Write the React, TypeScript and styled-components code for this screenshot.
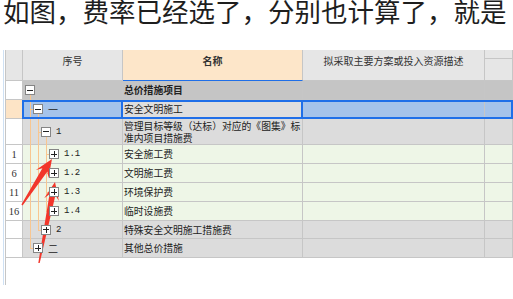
import React from "react";
import styled, { createGlobalStyle, css } from "styled-components";

const GlobalStyle = createGlobalStyle`
  html, body {
    margin: 0;
    padding: 0;
    background: #ffffff;
  }
  body {
    width: 513px;
    height: 299px;
    overflow: hidden;
    position: relative;
    font-family: "Noto Sans CJK SC", "Noto Sans", sans-serif;
  }
`;

const CJK = `"Noto Sans CJK SC", "Noto Sans", sans-serif`;
const ORANGE = "#f8c690";
const BLUE = "#1f6fe8";
const LINE = "#c6c6c6";

type Tone = "group" | "selected" | "grey" | "green";

const tones: Record<Tone, string> = {
  group: "#c5c5c5",
  selected: "#a5c3ea",
  grey: "#dcdcdc",
  green: "#eef6e7",
};

const Question = styled.div`
  font-family: ${CJK};
  font-size: 26.5px;
  line-height: 22px;
  color: #1e1e1e;
  white-space: nowrap;
  padding-left: 3px;
`;

const Frame = styled.div`
  margin: 28px 0 0 3px;
  height: 235px;
  border-left: 1px solid #cfe1f4;
  padding-left: 1px;
`;

const Grid = styled.div`
  height: 100%;
  border-left: 1px solid ${LINE};
  font-family: ${CJK};
  font-size: 10px;
  color: #222;
`;

const Row = styled.div<{ $h: number; $selected?: boolean }>`
  display: flex;
  height: ${(p) => p.$h}px;
  position: relative;

  ${(p) =>
    p.$selected &&
    css`
      &::after {
        content: "";
        position: absolute;
        left: 16px;
        right: 0;
        top: 0;
        bottom: 0;
        border: 2px solid ${BLUE};
        pointer-events: none;
      }
    `}
`;

const Cell = styled.div<{ $w?: number; $bg: string }>`
  box-sizing: border-box;
  ${(p) => (p.$w ? `width: ${p.$w}px; flex: none;` : "flex: 1;")}
  background: ${(p) => p.$bg};
  border-right: 1px solid ${LINE};
  border-bottom: 1px solid ${LINE};
  position: relative;
  display: flex;
  align-items: center;
`;

const NumCell = styled(Cell)`
  justify-content: center;
  font-family: "Liberation Serif", serif;
  font-size: 10.5px;
  color: #333;
`;

const HeadCell = styled(Cell)<{ $bold?: boolean; $mark?: boolean }>`
  align-items: flex-start;
  justify-content: center;
  padding-top: 1px;
  line-height: 19px;
  font-weight: ${(p) => (p.$bold ? 700 : 400)};
  color: #333;
  ${(p) => p.$mark && `border-bottom-color: ${BLUE};`}
`;

const SubHead = styled.div`
  width: 100%;
  height: 7px;
  border-bottom: 1px solid ${LINE};
`;

const NameCell = styled(Cell)<{ $bold?: boolean; $focus?: boolean }>`
  padding-left: 1px;
  line-height: 12px;
  font-size: 9.8px;
  white-space: nowrap;
  font-weight: ${(p) => (p.$bold ? 700 : 400)};

  ${(p) =>
    p.$focus &&
    css`
      &::after {
        content: "";
        position: absolute;
        left: -2px;
        right: -1px;
        top: 0;
        bottom: -1px;
        border: 2px solid ${BLUE};
      }
    `}
`;

const TreeCell = styled(Cell)`
  align-items: stretch;
  padding-left: 2px;
`;

type GuideKind = "pipe" | "tee" | "elbow";

const Guide = styled.span<{ $kind: GuideKind }>`
  width: 8px;
  flex: none;
  position: relative;

  &::before {
    content: "";
    position: absolute;
    left: 5px;
    width: 1px;
    top: 0;
    background: ${ORANGE};
    bottom: ${(p) => (p.$kind === "elbow" ? "50%" : "-1px")};
  }

  ${(p) =>
    p.$kind !== "pipe" &&
    css`
      &::after {
        content: "";
        position: absolute;
        left: 5px;
        width: 3px;
        height: 1px;
        top: 50%;
        background: ${ORANGE};
      }
    `}
`;

const Node = styled.span<{ $open: boolean }>`
  width: 10px;
  flex: none;
  position: relative;
  display: flex;
  align-items: center;

  ${(p) =>
    p.$open &&
    css`
      &::after {
        content: "";
        position: absolute;
        left: 5px;
        width: 1px;
        top: calc(50% + 5px);
        bottom: -1px;
        background: ${ORANGE};
      }
    `}
`;

const Toggle = styled.span<{ $plus: boolean }>`
  box-sizing: border-box;
  width: 10px;
  height: 10px;
  border: 1px solid #858585;
  background: #fff;
  position: relative;
  z-index: 1;

  &::before {
    content: "";
    position: absolute;
    left: 1px;
    top: 3.5px;
    width: 6px;
    height: 1px;
    background: #222;
  }

  ${(p) =>
    p.$plus &&
    css`
      &::after {
        content: "";
        position: absolute;
        left: 3.5px;
        top: 1px;
        width: 1px;
        height: 6px;
        background: #222;
      }
    `}
`;

const Code = styled.span<{ $mono?: boolean }>`
  align-self: center;
  margin-left: 5px;
  font-family: ${(p) => (p.$mono ? `"Liberation Mono", monospace` : CJK)};
  font-size: ${(p) => (p.$mono ? "9px" : "10px")};
  color: #222;
`;

const Arrows = styled.svg`
  position: absolute;
  left: 0;
  top: 0;
  pointer-events: none;
`;

type Item = {
  num: string;
  tone: Tone;
  guides: GuideKind[];
  plus: boolean;
  open: boolean;
  code: string;
  mono?: boolean;
  name: React.ReactNode;
  h: number;
};

const items: Item[] = [
  { num: "", tone: "group", guides: [], plus: false, open: true, code: "", name: "总价措施项目", h: 19 },
  { num: "", tone: "selected", guides: ["tee"], plus: false, open: true, code: "一", name: "安全文明施工", h: 19 },
  {
    num: "",
    tone: "grey",
    guides: ["pipe", "tee"],
    plus: false,
    open: true,
    code: "1",
    mono: true,
    name: (
      <>
        管理目标等级（达标）对应的《图集》标
        <br />
        准内项目措施费
      </>
    ),
    h: 26,
  },
  { num: "1", tone: "green", guides: ["pipe", "pipe", "tee"], plus: true, open: false, code: "1.1", mono: true, name: "安全施工费", h: 19 },
  { num: "6", tone: "green", guides: ["pipe", "pipe", "tee"], plus: true, open: false, code: "1.2", mono: true, name: "文明施工费", h: 19 },
  { num: "11", tone: "green", guides: ["pipe", "pipe", "tee"], plus: true, open: false, code: "1.3", mono: true, name: "环境保护费", h: 19 },
  { num: "16", tone: "green", guides: ["pipe", "pipe", "elbow"], plus: true, open: false, code: "1.4", mono: true, name: "临时设施费", h: 19 },
  { num: "", tone: "grey", guides: ["pipe", "elbow"], plus: true, open: false, code: "2", mono: true, name: "特殊安全文明施工措施费", h: 18 },
  { num: "", tone: "grey", guides: ["elbow"], plus: true, open: false, code: "二", name: "其他总价措施", h: 19 },
];

function arrowPoints(x1: number, y1: number, x2: number, y2: number) {
  const dx = x2 - x1;
  const dy = y2 - y1;
  const len = Math.hypot(dx, dy);
  const ux = dx / len;
  const uy = dy / len;
  const nx = -uy;
  const ny = ux;
  const head = 18;
  const notch = 13;
  const barb = 7.5;
  const neck = 3;
  const tail = 0.7;
  const p = (d: number, w: number) =>
    `${(x1 + ux * d + nx * w).toFixed(1)},${(y1 + uy * d + ny * w).toFixed(1)}`;
  return [
    p(0, tail),
    p(len - notch, neck),
    p(len - head, barb),
    p(len, 0),
    p(len - head, -barb),
    p(len - notch, -neck),
    p(0, -tail),
  ].join(" ");
}

const App: React.FC = () => {
  return (
    <>
      <GlobalStyle />
      <Question>如图，费率已经选了，分别也计算了，就是</Question>
      <Frame>
        <Grid>
          <Row $h={31}>
            <NumCell $w={17} $bg="#e6e6e6" />
            <HeadCell $w={100} $bg="#e6e6e6">
              序号
            </HeadCell>
            <HeadCell $w={180} $bg="#fde6c9" $bold $mark>
              名称
            </HeadCell>
            <HeadCell $w={182} $bg="#e6e6e6">
              拟采取主要方案或投入资源描述
            </HeadCell>
            <HeadCell $bg="#e6e6e6">
              <SubHead />
            </HeadCell>
          </Row>
          {items.map((it, i) => {
            const bg = tones[it.tone];
            const selected = it.tone === "selected";
            return (
              <Row key={i} $h={it.h} $selected={selected}>
                <NumCell $w={17} $bg={selected ? "#fde4c6" : "#ffffff"}>
                  {it.num}
                </NumCell>
                <TreeCell $w={100} $bg={bg}>
                  {it.guides.map((g, j) => (
                    <Guide key={j} $kind={g} />
                  ))}
                  <Node $open={it.open}>
                    <Toggle $plus={it.plus} />
                  </Node>
                  {it.code && <Code $mono={it.mono}>{it.code}</Code>}
                </TreeCell>
                <NameCell
                  $w={180}
                  $bg={selected ? "#dedede" : bg}
                  $bold={it.tone === "group"}
                  $focus={selected}
                >
                  <span>{it.name}</span>
                </NameCell>
                <Cell $w={182} $bg={bg} />
                <Cell $bg={bg} />
              </Row>
            );
          })}
        </Grid>
      </Frame>
      <Arrows width={513} height={299} viewBox="0 0 513 299">
        <polygon points={arrowPoints(22, 205, 52, 159)} fill="#f2362b" />
        <polygon points={arrowPoints(39, 263, 55, 182)} fill="#f2362b" />
      </Arrows>
    </>
  );
};

export default App;
